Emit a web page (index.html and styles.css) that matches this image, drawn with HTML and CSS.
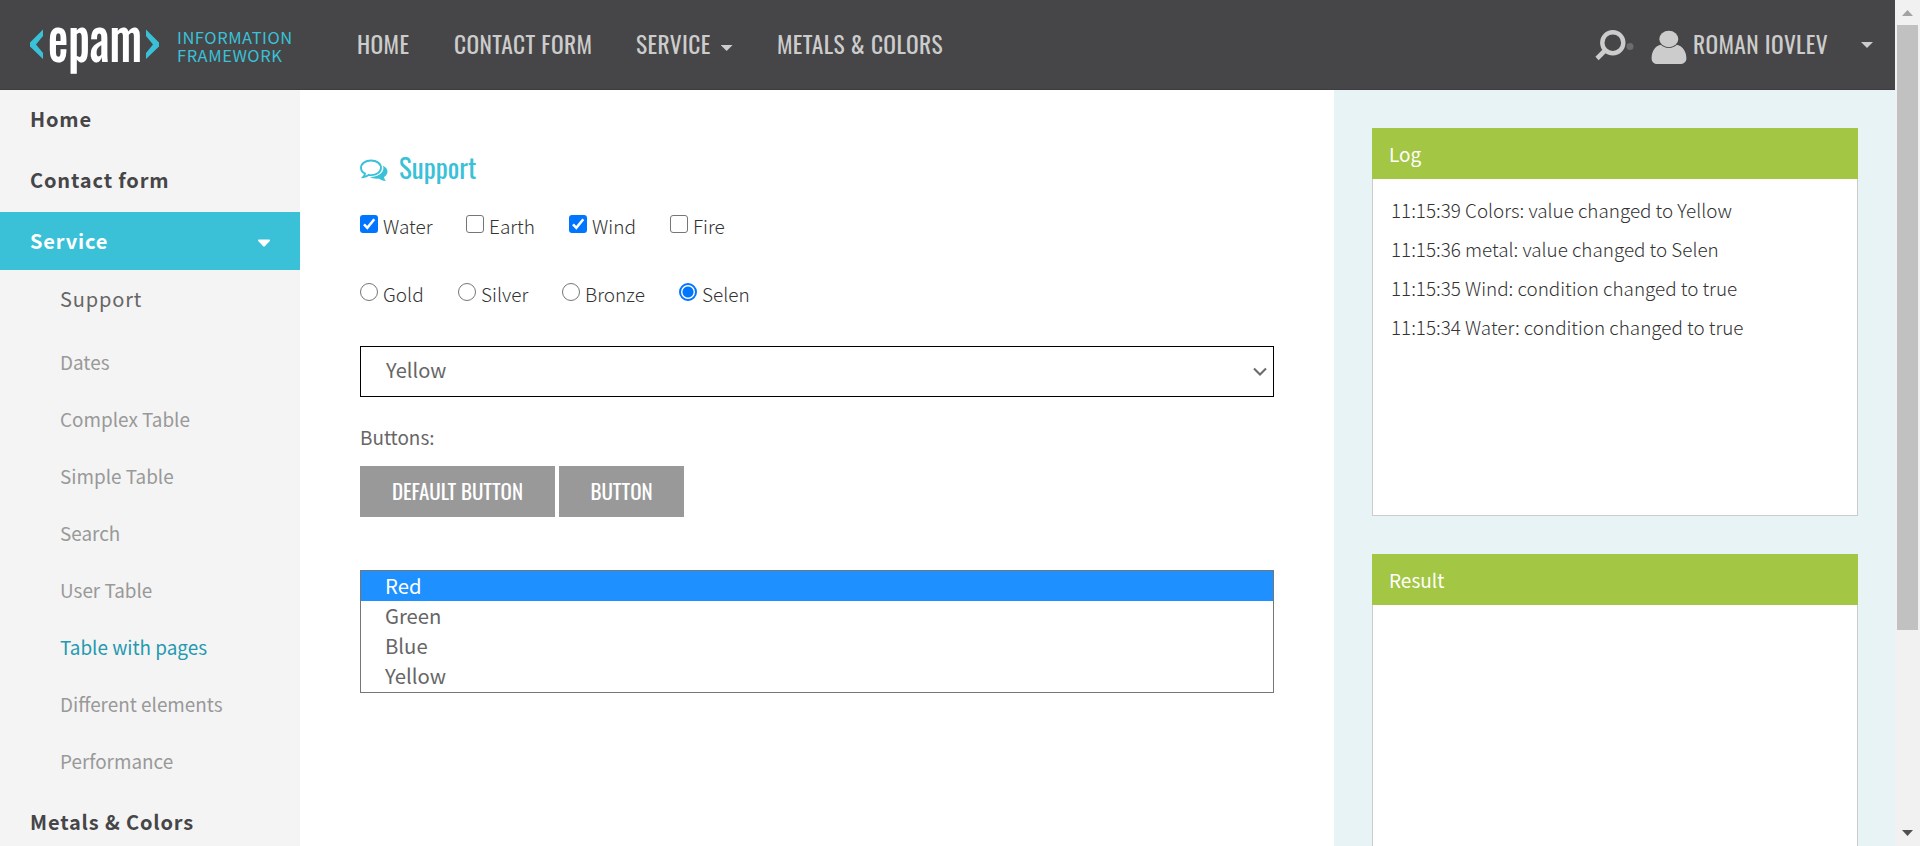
FILE: index.html
```
<!DOCTYPE html>
<html lang="en">
<head>
<meta charset="utf-8">
<title>Different Elements</title>
<link rel="stylesheet" href="styles.css">
</head>
<body>
<div class="window">
  <div class="page">
    <header class="header">
      <a class="logo">
        <svg class="logo-mark" width="129" height="46" viewBox="0 0 129 46">
          <path class="bracket" d="M13 4.500V11L6 19.500L13 28V34L0 21.500V17.500Z"/>
          <path class="bracket" d="M116 4.500V11L123 19.500L116 28V34L129 21.500V17.500Z"/>
          <text class="logo-text" x="18" y="36.500" textLength="94" lengthAdjust="spacingAndGlyphs">epam</text>
        </svg>
        <span class="logo-name">INFORMATION<br>FRAMEWORK</span>
      </a>
      <nav class="nav">
        <a class="nav-home">HOME</a>
        <a class="nav-contact">CONTACT FORM</a>
        <a class="nav-service">SERVICE<i class="caret"></i></a>
        <a class="nav-metals">METALS &amp; COLORS</a>
      </nav>
      <div class="user">
        <svg class="search-icon" width="40" height="32" viewBox="0 0 40 32">
          <circle cx="17.800" cy="12.700" r="10.500" fill="none" stroke="#ccc" stroke-width="4.400"/>
          <path d="M10.500 20L2 28.500" stroke="#ccc" stroke-width="4.600"/>
          <circle cx="35" cy="16.500" r="3.500" fill="#6c6c6d"/>
        </svg>
        <svg class="user-icon" width="36" height="36" viewBox="0 0 36 36">
          <path fill="#ccc" d="M9.700 14.800C3.500 16.300.6 22 .6 28.500C.6 32 3 34 6.500 34H29C32.600 34 35.400 32 35.400 28.500C35.400 22 32 16.300 25.900 14.800C24 16.800 21.300 18 17.800 18C14.500 18 11.700 16.800 9.700 14.800Z"/>
          <ellipse cx="17.800" cy="9" rx="9.500" ry="8.300" fill="#ccc"/>
        </svg>
        <span class="user-name">ROMAN IOVLEV</span>
        <i class="caret"></i>
      </div>
    </header>
    <div class="columns">
      <aside class="sidebar">
        <a class="side-item">Home</a>
        <a class="side-item">Contact form</a>
        <a class="side-item side-active">Service<svg width="14" height="9" viewBox="0 0 14 9"><path fill="#fff" d="M1.500.5H12.500Q13.500 1 12.800 2L7.800 7.300Q7 8 6.200 7.300L1.200 2Q.5 1 1.500.5Z"/></svg></a>
        <div class="submenu">
          <a class="sub-item sub-first">Support</a>
          <a class="sub-item">Dates</a>
          <a class="sub-item">Complex Table</a>
          <a class="sub-item">Simple Table</a>
          <a class="sub-item">Search</a>
          <a class="sub-item">User Table</a>
          <a class="sub-item sub-hover">Table with pages</a>
          <a class="sub-item">Different elements</a>
          <a class="sub-item">Performance</a>
        </div>
        <a class="side-item">Metals &amp; Colors</a>
      </aside>
      <main class="main">
        <h1 class="title">
          <svg width="28" height="24" viewBox="0 0 28 24">
            <path fill="none" stroke="#3ac1d8" stroke-width="1.900" d="M11 1.500C5.300 1.500 1 4.700 1 8.800C1 11.300 2.500 13.400 5 14.700C4.800 16 4.300 16.900 3.300 18C5.500 17.700 7.300 16.900 8.600 15.900C9.400 16.050 10.200 16.100 11 16.100C16.700 16.100 21 12.900 21 8.800C21 4.700 16.700 1.500 11 1.500Z"/>
            <path fill="#3ac1d8" d="M22.700 6.500C25.500 7.800 27.500 10 27.500 12.500C27.500 14.900 26.100 16.800 24 18.100C24.200 19.500 24.800 20.700 25.800 22C23 21.800 20.800 21 18.800 19.500C15.500 20 12.300 19.400 10 18C17 18.200 23.700 14.500 23.400 8.800Q23.300 7.500 22.700 6.500Z"/>
          </svg>
          <span>Support</span>
        </h1>
        <div class="choices">
          <label class="choice c-water"><i class="box on"><svg width="18" height="18" viewBox="0 0 18 18"><path d="M4 9.400L7.300 12.800L14.300 4.200" fill="none" stroke="#fff" stroke-width="2.600"/></svg></i>Water</label>
          <label class="choice c-earth"><i class="box"></i>Earth</label>
          <label class="choice c-wind"><i class="box on"><svg width="18" height="18" viewBox="0 0 18 18"><path d="M4 9.400L7.300 12.800L14.300 4.200" fill="none" stroke="#fff" stroke-width="2.600"/></svg></i>Wind</label>
          <label class="choice"><i class="box"></i>Fire</label>
        </div>
        <div class="choices radios">
          <label class="choice r-gold"><i class="dot"></i>Gold</label>
          <label class="choice r-silver"><i class="dot"></i>Silver</label>
          <label class="choice r-bronze"><i class="dot"></i>Bronze</label>
          <label class="choice"><i class="dot on"></i>Selen</label>
        </div>
        <div class="select"><span>Yellow</span>
          <svg width="14" height="10" viewBox="0 0 14 10"><path d="M1 1.500L7 7.500L13 1.500" fill="none" stroke="#6b6b6b" stroke-width="2.100"/></svg>
        </div>
        <div class="label">Buttons:</div>
        <div class="buttons">
          <button class="button b-default">DEFAULT BUTTON</button>
          <button class="button b-plain">BUTTON</button>
        </div>
        <div class="list">
          <div class="option selected">Red</div>
          <div class="option">Green</div>
          <div class="option">Blue</div>
          <div class="option">Yellow</div>
        </div>
      </main>
      <section class="right">
        <div class="panel">
          <div class="panel-head">Log</div>
          <div class="panel-body">
            <p>11:15:39 Colors: value changed to Yellow</p>
            <p>11:15:36 metal: value changed to Selen</p>
            <p>11:15:35 Wind: condition changed to true</p>
            <p>11:15:34 Water: condition changed to true</p>
          </div>
        </div>
        <div class="panel">
          <div class="panel-head">Result</div>
          <div class="panel-body"></div>
        </div>
      </section>
    </div>
  </div>
  <div class="scrollbar">
    <svg width="25" height="25" viewBox="0 0 25 25"><path fill="#a3a3a3" d="M7 16L12.500 10L18 16Z"/></svg>
    <div class="thumb"></div>
    <svg class="down" width="25" height="25" viewBox="0 0 25 25"><path fill="#505050" d="M7 9L12.500 15L18 9Z"/></svg>
  </div>
</div>
</body>
</html>
```
FILE: styles.css
```
* { box-sizing: border-box; }
body { margin: 0; font-family: "Noto Sans CJK JP", "Noto Sans", sans-serif; overflow: hidden; background: #fff; }
.window { display: flex; width: 1920px; height: 846px; overflow: hidden; }
.page { width: 1895px; height: 846px; display: flex; flex-direction: column; overflow: hidden; }

.header { flex: none; height: 90px; background: #464547; border-bottom: 1px solid #3f3b41; display: flex; }
.logo { display: flex; width: 357px; padding-left: 30px; }
.logo-mark { margin-top: 25px; flex: none; overflow: visible; }
.bracket { fill: #3ac1d8; }
.logo-text { font-family: Oswald, sans-serif; font-weight: 500; font-size: 60px; fill: #fff; }
.logo-name { margin: 28px 0 0 18px; font-size: 16.500px; line-height: 18px; letter-spacing: .55px; color: #3ac1d8; }
.nav { display: flex; flex: 1; font-family: Oswald, sans-serif; font-weight: 400; font-size: 23.500px; line-height: 87px; letter-spacing: .35px; color: #ccc; white-space: nowrap; }
.nav-home { width: 97px; }
.nav-contact { width: 182px; }
.nav-service { width: 141px; }
.caret { display: inline-block; width: 12px; height: 6px; background: #ccc; clip-path: polygon(0 0, 100% 0, 50% 100%); }
.nav .caret { margin-left: 10px; vertical-align: 3px; }
.user { display: flex; width: 300px; color: #ccc; }
.search-icon { margin-top: 30px; width: 40px; }
.user-icon { margin: 30px 0 0 16px; }
.user-name { width: 168px; margin-left: 6px; font-family: Oswald, sans-serif; font-weight: 400; font-size: 23.500px; line-height: 87px; letter-spacing: .35px; white-space: nowrap; }
.user .caret { margin-top: 42px; flex: none; }

.columns { flex: 1; display: flex; min-height: 0; }
.sidebar { width: 300px; background: #f4f4f4; overflow: hidden; display: flex; flex-direction: column; }
.side-item { flex: none; height: 58px; line-height: 58px; margin-bottom: 3px; padding: 0 29px 0 30px; font-size: 20px; font-weight: 700; letter-spacing: .85px; color: #464547; }
.side-active { background: #3ac1d8; color: #fff; margin-bottom: 0; display: flex; justify-content: space-between; align-items: center; }
.side-active svg { margin-top: 5px; }
.submenu { display: flex; flex-direction: column; padding-bottom: 4px; }
.sub-item { height: 57px; line-height: 57px; padding-left: 60px; font-size: 18.900px; color: #999; }
.sub-first { height: 58px; margin-bottom: 5px; font-size: 20px; letter-spacing: .85px; color: #666; }
.sub-hover { color: #2499b0; }

.main { width: 1034px; padding: 0 60px; display: flex; flex-direction: column; }
.title { display: flex; margin: 60px 0 0; height: 40px; font-family: Oswald, sans-serif; font-weight: 400; font-size: 27px; line-height: 34px; color: #3ac1d8; }
.title svg { margin: 9px 11px 0 0; }
.choices { display: flex; margin-top: 25px; height: 24px; }
.radios { margin-top: 44px; }
.choice { display: flex; font-size: 19px; font-weight: 300; line-height: 21px; color: #333; }
.box, .dot { width: 18px; height: 18px; margin-right: 5px; border: 1.500px solid #767676; border-radius: 3px; background: #fff; flex: none; }
.box.on { border: 0; background: #0075ff; }
.box svg { display: block; }
.dot { border-radius: 50%; }
.dot.on { border: 2px solid #0075ff; background: radial-gradient(circle, #0075ff 5px, #fff 6px); }
.c-water { width: 106px; } .c-earth { width: 103px; } .c-wind { width: 101px; }
.r-gold { width: 98px; } .r-silver { width: 104px; } .r-bronze { width: 117px; }
.select { margin-top: 39px; height: 51px; border: 1px solid #000; display: flex; justify-content: space-between; padding: 0 6px 0 25px; font-size: 20px; line-height: 45px; color: #666; }
.select svg { margin-top: 20px; }
.label { height: 40px; margin-top: 21px; font-size: 18.900px; line-height: 37px; color: #666; }
.buttons { display: flex; gap: 4px; margin-top: 8px; }
.button { height: 51px; border: 0; padding: 0 0 2px; background: #999; color: #fff; font-family: Oswald, sans-serif; font-weight: 400; font-size: 21px; line-height: 49px; }
.b-default { width: 195px; }
.b-plain { width: 125px; }
.list { flex: none; margin-top: 53px; height: 123px; border: 1px solid #767676; }
.option { height: 30px; padding-left: 24px; font-size: 20.300px; line-height: 29px; color: #666; }
.selected { background: #1e90ff; color: #fff; }

.right { width: 561px; background: #e8f3f5; padding: 38px 37px 0 38px; }
.panel { height: 388px; margin-bottom: 38px; border: 1px solid #ccc; border-top: 0; background: #fff; }
.panel-head { height: 51px; margin: 0 -1px; padding-left: 17px; background: #a3c644; color: #fff; font-size: 19px; line-height: 51px; }
.panel-body { padding: 12px 0 0 18px; }
.panel-body p { margin: 0; height: 39px; font-size: 18.850px; line-height: 38px; font-weight: 300; color: #333; white-space: nowrap; }

.scrollbar { width: 25px; background: #f1f1f1; display: flex; flex-direction: column; }
.scrollbar svg { display: block; }
.thumb { width: 21px; height: 605px; margin-left: 2px; background: #c1c1c1; }
.down { margin-top: auto; }
```
